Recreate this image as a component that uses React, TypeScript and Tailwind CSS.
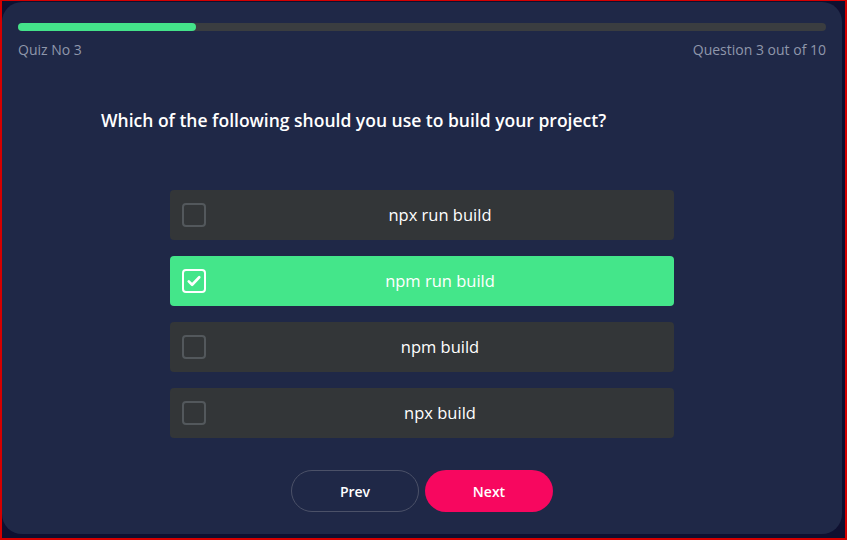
import { useState } from "react"

const options = ["npx run build", "npm run build", "npm build", "npx build"]

function CheckBox({ checked }: { checked: boolean }) {
  if (checked) {
    return (
      <span className="flex h-6 w-6 shrink-0 items-center justify-center rounded-[4px] border-2 border-white">
        <svg viewBox="0 0 24 24" className="h-[18px] w-[18px]" fill="none" stroke="white" strokeWidth="3.5" strokeLinecap="round" strokeLinejoin="round">
          <path d="M5 12.5l4.5 4.5L19 7" />
        </svg>
      </span>
    )
  }
  return <span className="h-6 w-6 shrink-0 rounded-[4px] border-2 border-[#53585c]" />
}

export default function App() {
  const [selected, setSelected] = useState(1)

  return (
    <div
      className="h-[540px] w-[847px] border-x-2 border-b-2 border-t border-[#d40000] bg-[#0f1030] pt-px pr-[3px] pb-[4px]"
      style={{ fontFamily: '"Open Sans", "Liberation Sans", sans-serif' }}
    >
      <div className="flex h-full flex-col rounded-[20px] bg-[#1f2847] px-4 pt-[21px]">
        {/* Progress */}
        <div className="h-2 w-full rounded-full bg-[#3a3d40]">
          <div className="h-2 w-[22%] rounded-full bg-[#44e38a]" />
        </div>
        <div className="mt-2 flex justify-between text-[14px] text-[#8f97ab]">
          <span>Quiz No 3</span>
          <span>Question 3 out of 10</span>
        </div>

        {/* Question */}
        <h1 className="mt-[47px] pl-[83px] text-[17.5px] font-semibold text-white">
          Which of the following should you use to build your project?
        </h1>

        {/* Options */}
        <div className="mx-auto mt-[57px] flex w-[504px] flex-col gap-4">
          {options.map((opt, i) => {
            const active = i === selected
            return (
              <button
                key={opt}
                onClick={() => setSelected(i)}
                className={
                  active
                    ? "flex h-[50px] items-center rounded-[4px] bg-[#44e68a] pl-3 text-white"
                    : "flex h-[50px] items-center rounded-[4px] bg-[#333638] pl-3 text-white"
                }
              >
                <CheckBox checked={active} />
                <span className="flex-1 text-center text-[16.5px]">{opt}</span>
              </button>
            )
          })}
        </div>

        {/* Nav */}
        <div className="mt-[32px] flex justify-center gap-1.5">
          <button className="h-[42px] w-[128px] rounded-full border border-[#4b5168] text-[14px] font-semibold text-white">
            Prev
          </button>
          <button className="h-[42px] w-[128px] rounded-full bg-[#f7075f] text-[14px] font-semibold text-white">
            Next
          </button>
        </div>
      </div>
    </div>
  )
}
